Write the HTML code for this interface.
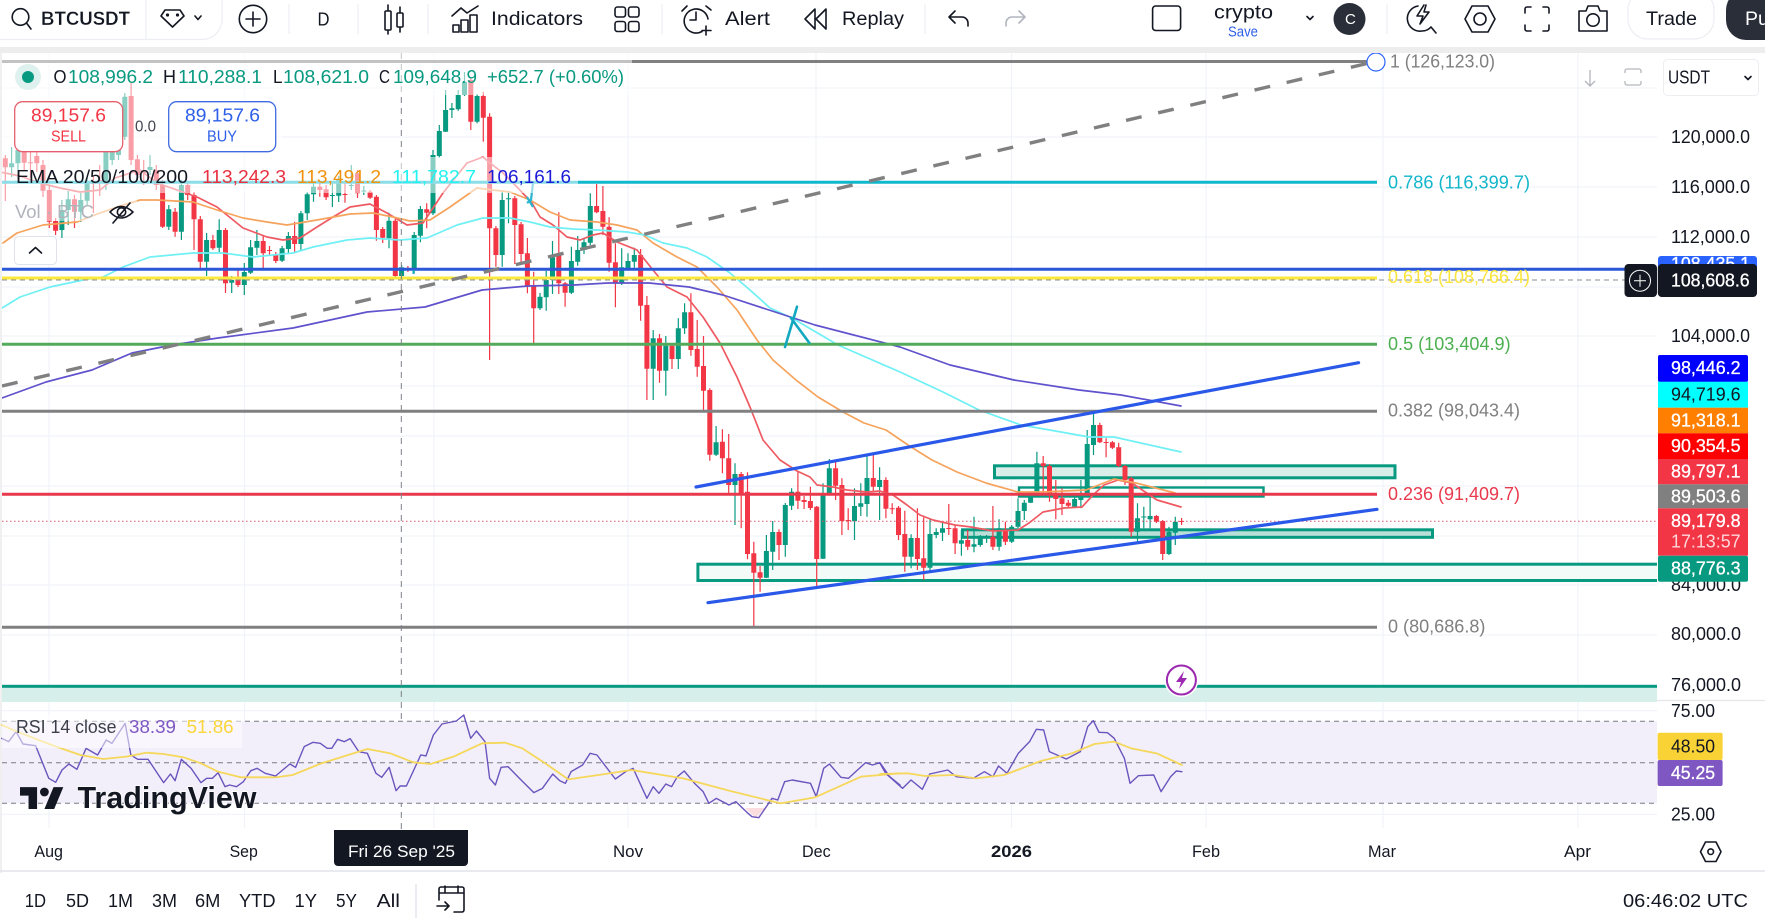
<!DOCTYPE html>
<html><head><meta charset="utf-8"><title>BTCUSDT</title>
<style>
html,body{margin:0;padding:0;background:#fff;width:1765px;height:918px;overflow:hidden}
svg{display:block}
text{font-family:"Liberation Sans",sans-serif;font-size:18px;fill:#131722;white-space:pre}
.g{fill:#089981}.r{fill:#f23645}.gy{fill:#808080}
.tag{fill:#fff;stroke:#fff;stroke-width:.3}
.ic{fill:none;stroke:#131722;stroke-width:1.6;stroke-linecap:round;stroke-linejoin:round}
.ax{fill:#131722}
.thin{fill:none;stroke-linejoin:round;stroke-linecap:round}
</style></head><body>
<svg width="1765" height="918" viewBox="0 0 1765 918" xmlns="http://www.w3.org/2000/svg">
<defs><clipPath id="pane"><rect x="2" y="53" width="1655" height="649"/></clipPath></defs>
<rect width="1765" height="918" fill="#fff"/>
<rect y="47" width="1765" height="6" fill="#ededee"/>
<rect y="53" width="2" height="820" fill="#f0f0f1"/>

<!-- grid -->
<g stroke="#f0f3fa" stroke-width="1.2">
<path d="M49 53V828M244.5 53V828M434 53V828M628 53V828M816 53V828M1011.5 53V828M1206 53V828M1383 53V828M1578 53V828"/>
<path d="M2 88H1657M2 137H1657M2 187H1657M2 237H1657M2 287H1657M2 336H1657M2 386H1657M2 436H1657M2 486H1657M2 536H1657M2 585H1657M2 635H1657M2 710.7H1657M2 814.3H1657"/>
</g>

<g clip-path="url(#pane)">
<!-- boxes under candles -->
<rect x="994.5" y="465.8" width="400.5" height="12" fill="#d9eee9" stroke="#089981" stroke-width="3"/>
<rect x="1019" y="487.5" width="244.5" height="9" fill="#fafdfc" stroke="#089981" stroke-width="2.4"/>
<rect x="962.5" y="529.8" width="470" height="7.5" fill="#b9e0d8" stroke="#089981" stroke-width="3"/>
<rect x="697.9" y="564.2" width="965" height="16.3" fill="#f3fbf9" stroke="#089981" stroke-width="3"/>
<rect x="2" y="686" width="1655" height="16" fill="#d7efea"/>
<rect x="2" y="684.8" width="1655" height="3" fill="#089981"/>

<!-- candle wicks -->
<path fill="none" stroke="#089981" stroke-width="1.2" d="M11.6 147V177M17.9 145V170M61.9 200V238M68.2 191V225M80.8 193V222M87.1 178V205M105.9 148V190M112.2 148V165M118.5 146V160M124.8 93V140M150 155V175M168.8 205V230M181.4 180V240M206.6 233V276M219.2 219.3V252M231.7 276V293M244.3 263V295M250.6 240V274M256.9 230V255M282.1 246V262M288.4 232V254M300.9 211V250.7M307.2 192V220M313.5 183V201.7M332.4 183V207M338.7 176V202M351.3 165V190M363.8 186V195M389 212.7V248.3M401.6 265V278M414.2 232V273M420.4 206V242.3M433 150V215M439.3 125V157.7M445.6 90V132M451.9 103V118M458.2 90V110.7M464.5 72V96M477.1 94V123.3M502.2 191.7V266.7M508.5 191.7V223.3M540 293V310M546.2 270.7V310.7M552.5 241V294M571.4 246.7V294M577.7 236V265.7M584 238V254M590.3 193.3V245M621.7 248.3V285M628 253.3V270M634.3 247.7V267.7M653.2 330V400M665.8 336V395.7M678.3 318.3V369M684.6 303.3V334M716.1 426V456M735 463.3V525M766.4 535V578M772.7 521V570M785.3 503V556.7M791.6 488.3V510M823 483.3V559M829.3 459V494M854.5 488.3V540M860.8 483.3V516M867 455V516.7M879.6 467.3V520M911.1 534.3V568.3M930 519V570.7M936.2 528.3V538.3M942.5 521.7V541M961.4 530V555.7M974 516.7V552.3M980.3 535V546.7M986.6 535V543M999.1 519.3V550.7M1011.7 525V543M1018 498.3V528M1024.3 500V520M1030.6 491.7V503M1036.9 451.7V494M1074.6 496.7V508M1080.9 480V508.3M1087.2 430V496M1093.5 413.3V455M1137.5 503.3V543.3M1143.8 506.7V528.3M1150.1 495V528.3M1169 526.7V555M1175.3 516.7V545"/>
<path fill="none" stroke="#f23645" stroke-width="1.2" d="M5.3 155V201M24.2 148V170M30.5 148V178M36.8 150V172M43 160V197M49.3 185V228M55.6 218V235M74.5 195V228M93.4 176V213M99.7 165V196M131.1 83V165M137.4 155V180M143.7 160V185M156.3 165V190M162.6 180V228M175.1 208V236.7M187.7 182V200M194 192V250M200.3 216V270M212.9 235V250M225.5 228V293M238 269V287M263.2 235V268.3M269.5 246V255M275.8 252V263M294.6 221.7V252.7M319.8 183V196.7M326.1 185V200M345 183V202.7M357.5 170V198M370.1 190V199M376.4 195V240.7M382.7 227V243M395.3 219V278M407.9 266V272M426.7 203.3V228.3M470.8 78V130M483.3 91.7V141.7M489.6 113.3V360M495.9 226V266.7M514.8 196V264M521.1 222V263.3M527.4 238V293.3M533.7 271.7V343.3M558.8 212.3V294M565.1 282V306.7M596.6 184V213.3M602.9 186V235M609.1 217.3V271.7M615.4 243.3V307.3M640.6 249V320.7M646.9 296V400M659.5 334V382.7M672 344V369M690.9 293.3V355.7M697.2 320V376.7M703.5 336V410M709.8 388.3V460.7M722.4 429.3V473.3M728.7 434V494M741.2 472V528.3M747.5 472.3V559.3M753.8 541.7V626.7M760.1 566V591.7M779 529.3V560M797.9 472.3V509M804.1 496V509M810.4 486.7V510M816.7 506V587.3M835.6 461.7V500M841.9 478.3V535M848.2 508.3V530M873.3 455V491.7M885.9 477.3V518.3M892.2 503.3V514M898.5 506V540M904.8 510.7V571.7M917.4 508.3V570M923.7 517.3V580M948.8 504V535M955.1 525V554M967.7 530V550M992.9 506V550M1005.4 521.7V545M1043.2 456V495M1049.5 464V501.7M1055.8 480V519.3M1062 488.3V515M1068.3 500V507M1099.8 422.7V443M1106.1 438.3V457.3M1112.4 441V449M1118.7 442.7V467M1125 465V485M1131.2 476.7V536.7M1156.4 515V523M1162.7 520V560M1181.6 518V525"/>
<!-- candle bodies -->
<path fill="none" stroke="#089981" stroke-width="5" d="M11.6 163.3V167.3M17.9 150V163.3M61.9 210V230M68.2 199.3V210M80.8 200V211.7M87.1 183.3V200.7M105.9 151.7V183.3M112.2 151.7V160M118.5 150V155M124.8 96.7V136.7M150 167V170M168.8 209.3V226.7M181.4 185V231.7M206.6 240V261.7M219.2 230V247.7M231.7 280V282.7M244.3 272V285M250.6 247.3V272.7M256.9 241V247.7M282.1 248.3V260.7M288.4 236V249M300.9 213.3V244M307.2 194.3V213.3M313.5 186.7V194.3M332.4 195V196M338.7 180V195.7M351.3 185V186M363.8 190.5V191.5M389 220.7V238.3M401.6 267.3V276M414.2 235V269.3M420.4 209V235.7M433 155V213.3M439.3 131V156M445.6 110V131.7M451.9 108.3V110M458.2 95V109.3M464.5 81.7V95M477.1 96V121.7M502.2 200V255M508.5 198.3V199.3M540 296.7V308.3M546.2 280V297.3M552.5 257.3V280M571.4 261V292.7M577.7 250V261.7M584 242.3V250M590.3 206V242.7M621.7 267.3V283.3M628 261V268.3M634.3 255V261.7M653.2 338.3V368.7M665.8 345.7V370.7M678.3 328.3V359M684.6 312.3V328.3M716.1 442.3V454.7M735 474V485M766.4 551V577.7M772.7 532V551.7M785.3 505V545M791.6 491.7V505.7M823 495V558.7M829.3 468.3V493.3M854.5 506V521.3M860.8 503.3V506.7M867 478V504M879.6 480V487M911.1 538V556.7M930 534V567.7M936.2 532V535M942.5 528.3V532.7M961.4 540.3V543.7M974 544.3V546.7M980.3 538.3V545M986.6 537.5V538.5M999.1 528.3V546.7M1011.7 526.7V541.7M1018 511V526.7M1024.3 502.7V511M1030.6 492.7V502.7M1036.9 463.3V492.7M1074.6 499V506.7M1080.9 495V500M1087.2 444V495M1093.5 425V445M1137.5 518.3V531.7M1143.8 516.5V517.5M1150.1 516V519.3M1169 531.7V554M1175.3 521.7V532.7"/>
<path fill="none" stroke="#f23645" stroke-width="5" d="M5.3 158.3V167.3M24.2 151.7V162.7M30.5 162.3V163.3M36.8 156V163.3M43 165V190.7M49.3 190V221.7M55.6 221V230.7M74.5 199.3V211.7M93.4 183V184M99.7 180V182M131.1 96V160M137.4 159.3V175M143.7 172V173M156.3 170V185M162.6 185V226.7M175.1 211.7V231.7M187.7 185V195M194 195V219.3M200.3 219.3V261.7M212.9 240V248.3M225.5 230V283.3M238 279.3V285M263.2 241V253.3M269.5 250V251M275.8 254V261M294.6 236V244M319.8 186.7V190M326.1 189.3V197.3M345 194V195M357.5 173.3V193.3M370.1 191.7V197.7M376.4 196.7V230M382.7 229V237.7M395.3 220.7V276M407.9 268.3V269.3M426.7 209.3V212.7M470.8 80V121.7M483.3 96V117.7M489.6 116.7V228.3M495.9 228.3V255M514.8 198.3V225M521.1 224.3V254M527.4 253.3V286.7M533.7 285V308.3M558.8 255V283.3M565.1 283.3V292.7M596.6 206V212.3M602.9 211V226.7M609.1 226.7V262.7M615.4 262.3V283.3M640.6 255V305.7M646.9 305V368.7M659.5 338.3V370.7M672 345.7V359M690.9 312.3V350M697.2 349V366.7M703.5 366V390.7M709.8 390V454.7M722.4 441.7V458.3M728.7 458.3V485M741.2 474V495M747.5 491.7V554M753.8 553.3V572.7M760.1 572.3V577.7M779 532V545M797.9 491.7V500.7M804.1 500V502M810.4 501V508M816.7 506.7V559M835.6 468.3V485.7M841.9 485V521M848.2 520V521M873.3 478V486.7M885.9 480V508.7M892.2 508.3V509.3M898.5 507.7V535M904.8 534V556.7M917.4 538V559M923.7 558.3V567.7M948.8 528V529M955.1 528.3V543.3M967.7 540V546.7M992.9 536.7V546.7M1005.4 530V541.7M1043.2 463.3V466M1049.5 466V495M1055.8 495V499M1062 498.3V504M1068.3 502.7V505.7M1099.8 425V442.3M1106.1 442V443M1112.4 442.3V447.7M1118.7 447.3V466M1125 466V480M1131.2 478.3V531.7M1156.4 516V521.7M1162.7 521V554M1181.6 521V522"/>

<!-- EMAs -->
<polyline class="thin" stroke="#ef5a62" stroke-width="1.7" points="0,172 20,176 40,183 60,188 80,192 100,190 115,178 140,170 157,183 197,197 217,207 243,228 267,237 283,240 300,238 317,227 333,217 350,207 370,204 387,213 407,225 423,223 443,193 467,163 483,157 490,163 503,173 517,187 532,203 540,217 553,225 567,237 580,240 593,235 603,233 617,242 637,250 653,270 667,287 687,297 703,317 720,343 737,377 750,407 763,440 780,460 797,471 810,477 817,485 833,487 847,490 867,492 880,491 893,495 907,505 920,515 933,520 955,525 971,527 993,531 1018,530 1029,523 1043,512 1064,508 1082,507 1093,495 1104,485 1118,480 1132,483 1157,500 1181,507"/>
<polyline class="thin" stroke="#f6a35c" stroke-width="1.7" points="3,243 17,233 43,225 77,222 100,213 117,207 140,200 157,200 193,202 217,210 243,218 267,222 287,225 317,220 350,214 373,213 393,217 410,221 430,220 450,207 477,188 493,190 510,192 530,200 550,212 570,220 597,222 617,225 637,230 653,243 677,257 697,267 717,287 737,310 757,340 773,360 796,380 818,397 843,412 864,423 886,430 911,447 932,460 957,472 986,483 1018,492 1043,492 1086,490 1114,479 1136,483 1175,493"/>
<polyline class="thin" stroke="#6ff0f5" stroke-width="1.7" points="2,308 20,297 50,287 83,280 103,277 123,267 150,257 193,253 223,253 253,257 293,253 313,247 347,240 370,238 400,240 427,238 457,225 483,218 510,218 530,222 550,227 573,229 597,230 627,232 645,235 663,243 687,248 707,257 730,273 750,290 770,308 792,318 838,345 900,372 943,392 979,410 1021,425 1061,432 1089,437 1114,437 1181,452"/>
<polyline class="thin" stroke="#5f52cc" stroke-width="1.7" points="2,398 46,382 92,370 132,353 172,345 218,338 293,328 367,312 425,307 482,290 528,286 574,285 608,283 649,283 689,287 723,295 769,310 815,325 900,347 950,365 1014,380 1079,390 1121,395 1181,406"/>

<!-- crosshair + dotted last price -->
<path d="M2 280H1625" stroke="#8a8d96" stroke-width="1" stroke-dasharray="5 4" fill="none"/>
<path d="M2 521.3H1657" stroke="#e0556b" stroke-width="1" stroke-dasharray="1.5 2.5" fill="none"/>

<!-- fib + horizontal lines -->
<path d="M2 61.5H1368" stroke="#808080" stroke-width="3"/>
<path d="M2 182.3H1377" stroke="#0fb8cc" stroke-width="3"/>
<path d="M2 269.3H1625" stroke="#2a58d8" stroke-width="3"/>
<path d="M2 278H1377" stroke="#fbe83f" stroke-width="3"/>
<path d="M2 344.3H1377" stroke="#53aa5a" stroke-width="3"/>
<path d="M2 411.3H1377" stroke="#808080" stroke-width="3"/>
<path d="M2 494.3H1377" stroke="#e8394d" stroke-width="3"/>
<path d="M2 627.3H1377" stroke="#808080" stroke-width="3"/>
<!-- trend lines -->
<path d="M2 386L1367 63.5" stroke="#808080" stroke-width="3.4" stroke-dasharray="16 17" fill="none"/>
<path d="M696 487L1358.6 362.7" stroke="#2a58e8" stroke-width="3.2" stroke-linecap="round"/>
<path d="M708 602.7L1377 509.3" stroke="#2a58e8" stroke-width="3.2" stroke-linecap="round"/>
<path d="M785 347L797 306.7M791 318L809.4 343" stroke="#12a9c0" stroke-width="2.6" stroke-linecap="round" fill="none"/>
<path d="M533 183L531 200L527 203M527 197L533 207" stroke="#2ab4cf" stroke-width="2.2" fill="none"/>
<path d="M413.5 270V274" stroke="#12a9c0" stroke-width="2"/>

<!-- event circle -->
<circle cx="1181.4" cy="680" r="17" fill="#fff"/>
<circle cx="1181.4" cy="680" r="14.5" fill="#fff" stroke="#9c27b0" stroke-width="2"/>
<path d="M1184 671L1176 682H1181L1179 689L1187 678H1182Z" fill="#9c27b0"/>
</g>

<path d="M401.3 53V838" stroke="#7d8088" stroke-width="1" stroke-dasharray="6 5" fill="none"/>

<!-- RSI -->
<rect x="2" y="721.3" width="1655" height="82" fill="#f3effa"/>
<path d="M2 721.3H1657M2 762.7H1657M2 803.3H1657" stroke="#787b86" stroke-width="1" stroke-dasharray="5 4" fill="none"/>
<path d="M1657 700.5H1765" stroke="#e4e6ea" stroke-width="1.2"/>
<polygon points="745,808 756,818 765,808" fill="#fbdde0"/>
<g transform="translate(0,660) scale(.574,.33333)">
<polyline class="thin" vector-effect="non-scaling-stroke" stroke="#6b54bd" stroke-width="1.4" points="3,235 15,245 28,215 40,252 62,257 85,355 97,367 108,330 120,312 134,328 150,265 170,285 185,240 195,250 218,190 228,285 240,298 258,298 285,368 297,342 305,362 316,298 333,325 350,368 360,355 370,355 380,338 392,380 400,375 412,380 424,365 437,332 448,325 462,340 480,348 505,312 515,322 530,260 545,247 558,250 570,265 578,265 588,238 600,245 610,236 625,275 640,280 655,340 665,352 678,322 690,392 697,378 708,378 733,285 742,288 755,225 770,192 795,183 808,165 820,235 830,213 845,245 853,355 863,375 873,322 885,320 905,355 930,398 945,385 963,342 975,362 985,370 995,335 1015,315 1028,280 1040,285 1072,357 1090,335 1103,325 1127,415 1138,380 1148,400 1160,372 1170,380 1180,350 1192,333 1210,370 1225,395 1235,430 1248,415 1270,435 1282,425 1300,455 1310,470 1322,473 1345,415 1355,420 1367,365 1380,360 1412,370 1422,410 1435,325 1445,312 1465,352 1478,355 1508,308 1520,315 1533,308 1550,350 1568,375"/>
<polyline class="thin" vector-effect="non-scaling-stroke" stroke="#f5d75a" stroke-width="1.8" points="3,195 30,215 90,255 140,285 180,297 220,290 255,278 285,282 320,292 350,310 380,335 420,352 480,352 510,345 560,310 640,267 680,280 720,307 750,312 790,290 840,250 880,248 910,265 950,310 990,358 1050,343 1100,330 1190,355 1270,392 1360,430 1420,412 1500,350 1568,340"/>
</g>
<g transform="translate(880,660) scale(.5644,.33333)">
<polyline class="thin" vector-effect="non-scaling-stroke" stroke="#6b54bd" stroke-width="1.4" points="0,310 10,340 40,385 55,360 75,388 88,342 120,330 135,350 165,355 185,335 200,350 210,318 225,340 245,280 265,245 277,208 290,210 300,275 330,297 355,275 368,200 378,182 388,217 403,218 415,235 433,295 443,370 458,347 485,345 498,395 515,350 525,333 535,335"/>
<polyline class="thin" vector-effect="non-scaling-stroke" stroke="#f5d75a" stroke-width="1.8" points="0,342 50,340 80,348 130,345 170,355 220,345 285,303 340,280 380,252 415,245 445,265 490,280 535,315"/>
</g>

<!-- translucent legend backgrounds -->
<g fill="#fff" fill-opacity=".52">
<rect x="2" y="53" width="630" height="42"/>
<rect x="2" y="95" width="280" height="62"/>
<rect x="2" y="157" width="576" height="36"/>
<rect x="2" y="193" width="135" height="28"/>
<rect x="2" y="714" width="240" height="34"/>
</g>

<!-- legend -->
<circle cx="28" cy="77" r="13" fill="#dff1ee"/><circle cx="28" cy="77" r="6" fill="#089981"/>
<text x="53.5" y="83" textLength="13" lengthAdjust="spacingAndGlyphs">O</text><text x="68" y="83" class="g" textLength="85" lengthAdjust="spacingAndGlyphs">108,996.2</text>
<text x="163" y="83" textLength="13" lengthAdjust="spacingAndGlyphs">H</text><text x="178" y="83" class="g" textLength="84" lengthAdjust="spacingAndGlyphs">110,288.1</text>
<text x="273" y="83" textLength="9.5" lengthAdjust="spacingAndGlyphs">L</text><text x="283" y="83" class="g" textLength="86" lengthAdjust="spacingAndGlyphs">108,621.0</text>
<text x="379" y="83" textLength="11" lengthAdjust="spacingAndGlyphs">C</text><text x="393" y="83" class="g" textLength="84" lengthAdjust="spacingAndGlyphs">109,648.9</text>
<text x="487" y="83" class="g" textLength="137" lengthAdjust="spacingAndGlyphs">+652.7 (+0.60%)</text>

<rect x="14.7" y="101.7" width="108" height="50" rx="8" fill="#fff" stroke="#e4606e" stroke-width="1.3"/>
<text x="31" y="121.5" class="r" textLength="75" lengthAdjust="spacingAndGlyphs">89,157.6</text>
<text x="51" y="141.5" class="r" style="font-size:16px" textLength="35" lengthAdjust="spacingAndGlyphs">SELL</text>
<text x="135" y="131.5" style="font-size:16px;fill:#434651" textLength="21" lengthAdjust="spacingAndGlyphs">0.0</text>
<rect x="168.7" y="101.7" width="107" height="50" rx="8" fill="#fff" stroke="#3f6be0" stroke-width="1.3"/>
<text x="185" y="121.5" style="fill:#2e5fe8" textLength="75" lengthAdjust="spacingAndGlyphs">89,157.6</text>
<text x="207" y="141.5" style="font-size:16px;fill:#2e5fe8" textLength="30" lengthAdjust="spacingAndGlyphs">BUY</text>

<text x="16" y="183" textLength="172" lengthAdjust="spacingAndGlyphs">EMA 20/50/100/200</text>
<text x="202" y="183" style="fill:#e8303f" textLength="84" lengthAdjust="spacingAndGlyphs">113,242.3</text>
<text x="297" y="183" style="fill:#f0920f" textLength="84" lengthAdjust="spacingAndGlyphs">113,491.2</text>
<text x="392" y="183" style="fill:#22f2f2" textLength="84" lengthAdjust="spacingAndGlyphs">111,782.7</text>
<text x="487" y="183" style="fill:#1a1ad8" textLength="84" lengthAdjust="spacingAndGlyphs">106,161.6</text>

<text x="15" y="218" style="fill:#b0b3bb" textLength="79" lengthAdjust="spacingAndGlyphs">Vol · BTC</text>
<g class="ic" stroke-width="1.4"><path d="M110 212Q121 201 133 212Q121 224 110 212Z"/><circle cx="121.5" cy="212" r="4.2"/><path d="M113 223L130 203"/></g>
<rect x="14.5" y="236.5" width="42" height="28" rx="4" fill="#fff" stroke="#e0e3eb"/>
<path d="M29.5 253L35.5 247.5L41.5 253" class="ic" stroke-width="1.8"/>

<text x="1390" y="67.5" class="gy" textLength="105" lengthAdjust="spacingAndGlyphs">1 (126,123.0)</text>
<circle cx="1376" cy="62" r="9" fill="#fff" stroke="#2962ff" stroke-width="1.2"/>

<text x="1388" y="188.3" style="fill:#12b6cc" textLength="142" lengthAdjust="spacingAndGlyphs">0.786 (116,399.7)</text>
<text x="1388" y="283" style="fill:#fbe43c" textLength="142" lengthAdjust="spacingAndGlyphs">0.618 (108,766.4)</text>
<text x="1388" y="350" style="fill:#4caf50" textLength="122.6" lengthAdjust="spacingAndGlyphs">0.5 (103,404.9)</text>
<text x="1388" y="416.7" class="gy" textLength="132" lengthAdjust="spacingAndGlyphs">0.382 (98,043.4)</text>
<text x="1388" y="500" style="fill:#e8394d" textLength="132" lengthAdjust="spacingAndGlyphs">0.236 (91,409.7)</text>
<text x="1388" y="632.7" class="gy" textLength="97.4" lengthAdjust="spacingAndGlyphs">0 (80,686.8)</text>

<text x="16" y="733" style="fill:#3c3f4a" textLength="100.5" lengthAdjust="spacingAndGlyphs">RSI 14 close</text>
<text x="129" y="733" style="fill:#7e57c2" textLength="47" lengthAdjust="spacingAndGlyphs">38.39</text>
<text x="186.6" y="733" style="fill:#fbd63c" textLength="47" lengthAdjust="spacingAndGlyphs">51.86</text>

<!-- TV logo -->
<path transform="translate(20,782.2) scale(1.22)" d="M14 22H7V11H0V4h14v18zM28 22h-8l7.5-18h8L28 22z" fill="#131722"/>
<circle cx="44.4" cy="792" r="4.4" fill="#131722"/>
<text x="77.5" y="808" style="font-size:31px;font-weight:700;fill:#131722;paint-order:stroke;stroke:#fff;stroke-width:1.5px" textLength="179" lengthAdjust="spacingAndGlyphs">TradingView</text>

<!-- top-right chart controls -->
<path d="M1590 70V86M1585 81L1590 86L1595 81" fill="none" stroke="#b2b5be" stroke-width="1.3"/>
<path d="M1625 73V71a2 2 0 0 1 2-2H1639a2 2 0 0 1 2 2V73M1625 81V83a2 2 0 0 0 2 2H1639a2 2 0 0 0 2-2V81" fill="none" stroke="#b4b6bd" stroke-width="1.3"/>
<rect x="1663.5" y="59.5" width="95" height="36" rx="4" fill="#fff" stroke="#eceef2"/>
<text x="1668" y="83.3" textLength="42" lengthAdjust="spacingAndGlyphs">USDT</text>
<path d="M1745 76.5L1748 79.5L1751 76.5" class="ic"/>

<!-- price axis -->
<text x="1671" y="143" textLength="79" lengthAdjust="spacingAndGlyphs" class="ax">120,000.0</text>
<text x="1671" y="193" textLength="79" lengthAdjust="spacingAndGlyphs" class="ax">116,000.0</text>
<text x="1671" y="243" textLength="79" lengthAdjust="spacingAndGlyphs" class="ax">112,000.0</text>
<text x="1671" y="342" textLength="79" lengthAdjust="spacingAndGlyphs" class="ax">104,000.0</text>
<text x="1671" y="591" textLength="70" lengthAdjust="spacingAndGlyphs" class="ax">84,000.0</text>
<text x="1671" y="640" textLength="70" lengthAdjust="spacingAndGlyphs" class="ax">80,000.0</text>
<text x="1671" y="691" textLength="70" lengthAdjust="spacingAndGlyphs" class="ax">76,000.0</text>
<text x="1671" y="717" textLength="44" lengthAdjust="spacingAndGlyphs" class="ax">75.00</text>
<text x="1671" y="820.5" textLength="44" lengthAdjust="spacingAndGlyphs" class="ax">25.00</text>

<rect x="1658" y="256" width="99" height="30" rx="3" fill="#2962ff"/>
<text x="1671" y="270" class="tag" textLength="79" lengthAdjust="spacingAndGlyphs">108,435.1</text>
<rect x="1624.5" y="264" width="32.5" height="33" rx="4" fill="#131722"/>
<rect x="1657.8" y="264" width="99.2" height="33" rx="4" fill="#131722"/>
<circle cx="1640" cy="280.7" r="10.5" fill="none" stroke="#fff" stroke-width="1"/>
<path d="M1634 280.7H1646M1640 274.7V286.7" stroke="#fff" stroke-width="1"/>
<text x="1671" y="286.5" class="tag" textLength="78.6" lengthAdjust="spacingAndGlyphs">108,608.6</text>

<rect x="1658" y="355" width="90" height="27" rx="2" fill="#0000ff"/>
<rect x="1658" y="381.7" width="90" height="26" fill="#00ffff"/>
<rect x="1658" y="407.7" width="90" height="25.6" fill="#ff7f00"/>
<rect x="1658" y="433.3" width="90" height="25.7" fill="#ff0000"/>
<rect x="1658" y="459" width="90" height="25.3" fill="#f23645"/>
<rect x="1658" y="484.3" width="90" height="24" fill="#808080"/>
<rect x="1658" y="508.3" width="90" height="47.4" fill="#f23645"/>
<rect x="1658" y="555.7" width="90" height="26" rx="2" fill="#089981"/>
<text x="1671" y="374" class="tag" textLength="69.6" lengthAdjust="spacingAndGlyphs">98,446.2</text>
<text x="1671" y="400.7" textLength="69.6" lengthAdjust="spacingAndGlyphs" style="fill:#131722">94,719.6</text>
<text x="1671" y="426.5" class="tag" textLength="69.6" lengthAdjust="spacingAndGlyphs">91,318.1</text>
<text x="1671" y="452" class="tag" textLength="69.6" lengthAdjust="spacingAndGlyphs">90,354.5</text>
<text x="1671" y="477.7" class="tag" textLength="69.6" lengthAdjust="spacingAndGlyphs">89,797.1</text>
<text x="1671" y="502.3" class="tag" textLength="69.6" lengthAdjust="spacingAndGlyphs">89,503.6</text>
<text x="1671" y="527" class="tag" textLength="69.6" lengthAdjust="spacingAndGlyphs">89,179.8</text>
<text x="1671" y="547.7" textLength="69.6" lengthAdjust="spacingAndGlyphs" style="fill:#ffd6da">17:13:57</text>
<text x="1671" y="574.7" class="tag" textLength="69.6" lengthAdjust="spacingAndGlyphs">88,776.3</text>

<rect x="1657.6" y="732.7" width="65" height="27.3" rx="2" fill="#f9d235"/>
<rect x="1657.6" y="760" width="65" height="26" rx="2" fill="#7e57c2"/>
<text x="1671" y="752.5" textLength="44" lengthAdjust="spacingAndGlyphs" style="fill:#131722">48.50</text>
<text x="1671" y="779" textLength="44" lengthAdjust="spacingAndGlyphs" class="tag">45.25</text>

<!-- time axis -->
<path d="M0 871H1765" stroke="#e0e3eb" stroke-width="1.6"/>
<text x="34.4" y="857" textLength="28.6" lengthAdjust="spacingAndGlyphs" style="font-size:17px">Aug</text>
<text x="229.6" y="857" textLength="28.2" lengthAdjust="spacingAndGlyphs" style="font-size:17px">Sep</text>
<text x="613" y="857" textLength="30" lengthAdjust="spacingAndGlyphs" style="font-size:17px">Nov</text>
<text x="802" y="857" textLength="28.7" lengthAdjust="spacingAndGlyphs" style="font-size:17px">Dec</text>
<text x="991" y="857" textLength="41" lengthAdjust="spacingAndGlyphs" style="font-size:17px;font-weight:700">2026</text>
<text x="1192" y="857" textLength="28" lengthAdjust="spacingAndGlyphs" style="font-size:17px">Feb</text>
<text x="1368" y="857" textLength="28" lengthAdjust="spacingAndGlyphs" style="font-size:17px">Mar</text>
<text x="1564" y="857" textLength="27" lengthAdjust="spacingAndGlyphs" style="font-size:17px">Apr</text>
<path d="M334 830H468V862a4 4 0 0 1-4 4H338a4 4 0 0 1-4-4Z" fill="#131722"/>
<text x="348" y="857" textLength="107" lengthAdjust="spacingAndGlyphs" style="font-size:17px;fill:#fff">Fri 26 Sep '25</text>
<g class="ic" stroke-width="1.2"><path d="M1700.5 851.7L1705.5 842H1716L1721 851.7L1716 861.5H1705.5Z"/><circle cx="1710.7" cy="851.7" r="2.8"/></g>

<!-- bottom bar -->
<text x="24.7" y="907" textLength="21.3" lengthAdjust="spacingAndGlyphs">1D</text>
<text x="66" y="907" textLength="23" lengthAdjust="spacingAndGlyphs">5D</text>
<text x="108" y="907" textLength="25" lengthAdjust="spacingAndGlyphs">1M</text>
<text x="152" y="907" textLength="25" lengthAdjust="spacingAndGlyphs">3M</text>
<text x="195" y="907" textLength="25.4" lengthAdjust="spacingAndGlyphs">6M</text>
<text x="239" y="907" textLength="36.5" lengthAdjust="spacingAndGlyphs">YTD</text>
<text x="294.5" y="907" textLength="22.5" lengthAdjust="spacingAndGlyphs">1Y</text>
<text x="336" y="907" textLength="21" lengthAdjust="spacingAndGlyphs">5Y</text>
<text x="376.6" y="907" textLength="23.4" lengthAdjust="spacingAndGlyphs">All</text>
<path d="M416 884V918" stroke="#e0e3eb" stroke-width="1.4"/>
<g class="ic" stroke-width="1.3"><path d="M439 893H464M445 886V893M458 886V893M439 900V889a2 2 0 0 1 2-2H462a2 2 0 0 1 2 2V910a2 2 0 0 1-2 2H454M437 906H449M445 902L449 906L445 910"/></g>
<text x="1623" y="907" textLength="125" lengthAdjust="spacingAndGlyphs">06:46:02 UTC</text>

<!-- top toolbar -->
<rect y="0" width="1765" height="47" fill="#fff"/>
<rect y="47" width="1765" height="6" fill="#ededee"/>
<path d="M0 39.5H202a20 20 0 0 0 20-20V0" fill="none" stroke="#eceef2" stroke-width="1.2"/>
<path d="M146 0V39M289 4V34M358 4V34M428 4V34M662 4V34M925 4V34M1387 4V34" stroke="#eceef2" stroke-width="1.2"/>
<g class="ic">
<circle cx="20.5" cy="17" r="8.3"/><path d="M26.5 23L31 29"/>
<path d="M165 10H180L184 16L172.5 27L161 16Z"/><path d="M195 16L198 19.5L201 16"/>
<circle cx="253" cy="19" r="13.7"/><path d="M246 19H260M253 12V26"/>
<path d="M388 5V34M400 7V32"/>
<rect x="385" y="11" width="6" height="19" rx="1" fill="#fff"/><rect x="397" y="13" width="6" height="14" rx="1" fill="#fff"/>
<path d="M452 16L461 8L467 13L478 6"/>
<path d="M453 25H459V32H453ZM461 20H468V32H461ZM470 15H477V32H470Z"/>
<rect x="615" y="7" width="10.5" height="10" rx="2.5"/><rect x="628.5" y="7" width="10.5" height="10" rx="2.5"/><rect x="615" y="21.5" width="10.5" height="10" rx="2.5"/><rect x="628.5" y="21.5" width="10.5" height="10" rx="2.5"/>
<path d="M702 31.5A12 12 0 1 1 708 19M696 12V20H690M682 11L687 6M706 6L711 10M706 26V35M702 30.5H711"/>
<path d="M815 9L805 19L815 29ZM826 9L816 19L826 29Z"/>
<path d="M955 11L949 17L955 23M949 17H962a6 6 0 0 1 6 6V26"/>
<rect x="1152.6" y="6" width="28" height="24.5" rx="3"/>
<path d="M1307 16.5L1310 19.5L1313 16.5"/>
<path d="M1424 5L1417 16H1423L1420 24L1429 12H1424L1426 5"/><path d="M1418 6A12 12 0 0 0 1422 31A12 12 0 0 0 1431 27M1431 27L1436 33"/>
<path d="M1472 6H1488L1495 19L1488 32H1472L1465 19Z"/><circle cx="1480" cy="19" r="6"/>
<path d="M1525 13V9a2 2 0 0 1 2-2H1531M1543 7H1547a2 2 0 0 1 2 2V13M1549 25V29a2 2 0 0 1-2 2H1543M1531 31H1527a2 2 0 0 1-2-2V25"/>
<path d="M1579 11H1586L1588 6H1598L1600 11H1607V31H1579Z"/><circle cx="1593" cy="20" r="6.2"/>
</g>
<path d="M1019 11L1025 17L1019 23M1025 17H1012a6 6 0 0 0-6 6V26" fill="none" stroke="#b2b5be" stroke-width="1.6" stroke-linecap="round" stroke-linejoin="round"/>
<circle cx="167.5" cy="15" r="1.6" fill="#131722"/><circle cx="177.5" cy="15" r="1.6" fill="#131722"/>
<text x="41" y="25" textLength="89" lengthAdjust="spacingAndGlyphs" style="font-size:19px;font-weight:700;stroke:#fff;stroke-width:.3">BTCUSDT</text>
<text x="317.5" y="25.5" textLength="12" lengthAdjust="spacingAndGlyphs" style="font-size:18px">D</text>
<text x="491" y="25" textLength="92" lengthAdjust="spacingAndGlyphs" style="font-size:19.5px">Indicators</text>
<text x="725" y="25" textLength="45" lengthAdjust="spacingAndGlyphs" style="font-size:19.5px">Alert</text>
<text x="842" y="25" textLength="62" lengthAdjust="spacingAndGlyphs" style="font-size:19.5px">Replay</text>
<text x="1214" y="18.5" textLength="59" lengthAdjust="spacingAndGlyphs" style="font-size:19.5px">crypto</text>
<text x="1228" y="36.5" textLength="30" lengthAdjust="spacingAndGlyphs" style="font-size:15px;fill:#2e5fe8">Save</text>
<circle cx="1349.5" cy="19" r="16" fill="#2a2e39"/>
<text x="1345" y="24" style="font-size:15px;fill:#fff">C</text>
<rect x="1628" y="-10" width="86" height="49" rx="20" fill="#fff" stroke="#eceef2" stroke-width="1.2"/>
<text x="1646" y="25" textLength="51" lengthAdjust="spacingAndGlyphs" style="font-size:19.5px">Trade</text>
<rect x="1726" y="-10" width="70" height="50" rx="20" fill="#2a2e39"/>
<text x="1745" y="25" style="font-size:19.5px;fill:#fff">Pu</text>
</svg>
</body></html>
